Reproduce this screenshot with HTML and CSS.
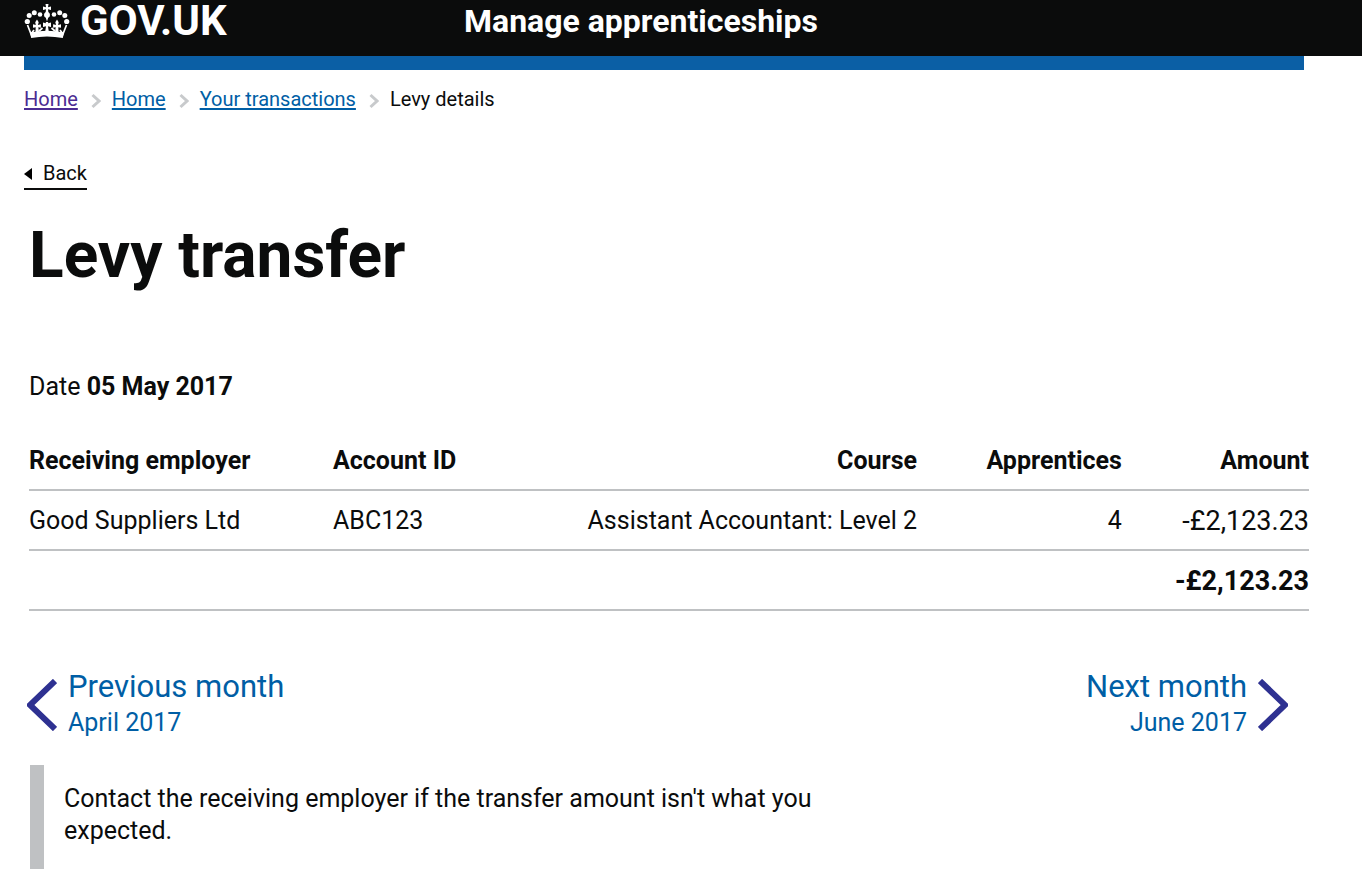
FILE: index.html
```html
<!DOCTYPE html>
<html lang="en">
<head>
<meta charset="utf-8">
<title>Levy transfer - Manage apprenticeships</title>
<meta name="viewport" content="width=device-width, initial-scale=1">
<link rel="stylesheet" href="styles.css">
</head>
<body>
<header class="header">
  <div class="header-inner">
    <a class="logo" href="#">
      <svg class="crown" viewBox="0 0 46 36" aria-hidden="true">
        <g fill="#fff">
          <path d="M21.500 1h3l-.5 3.200 3-.7v3.500l-3-.7.300 2.700q1.700 1 1.700 3 0 2.200-1.800 2.800L23 18.500l-1.200-3.700Q20 14.200 20 12q0-2 1.700-3L22 6.300 19 7V3.500l3 .7z"/>
          <circle cx="3.300" cy="18.500" r="2.600"/><circle cx="5.200" cy="12.500" r="2.500"/><circle cx="10.300" cy="9.700" r="2.500"/><circle cx="16" cy="11.500" r="2.300"/>
          <circle cx="42.700" cy="18.500" r="2.600"/><circle cx="40.800" cy="12.500" r="2.500"/><circle cx="35.700" cy="9.700" r="2.500"/><circle cx="30" cy="11.500" r="2.300"/>
          <path d="M6 29.500q17-3.500 34 0L38.800 35Q23 32 7.200 35z"/>
          <path d="M19 19.500l3 .8-.3-1.300h2.600l-.3 1.300 3-.8v4.500l-3-.8.800 5.500h-3.600l.8-5.500-3 .8z"/>
          <path d="M13 16.500l1.700 2.700-.8 2.800 3-.8v3.500l-2.600-.5L15 29h-3.500l.2-4.800-2.700.5v-3.500l2.800.8-.6-2.800z"/>
          <path d="M33 16.500l1.700 2.700-.6 2.800 2.900-.8v3.500l-2.700-.5.200 4.800H31l.7-4.800-2.600.5v-3.500l3 .8-.8-2.800z"/>
        </g>
        <path d="M3.500 22 7 31l3-4M42.500 22 39 31l-3-4M15 28l3.500-3M31 28l-3.500-3" fill="none" stroke="#fff" stroke-width="1.700"/>
      </svg>
      <span>GOV.UK</span>
    </a>
    <a class="service" href="#">Manage apprenticeships</a>
  </div>
</header>
<div class="page">
  <div class="bar"></div>
  <nav aria-label="Breadcrumb">
    <ol class="breadcrumbs">
      <li><a class="visited" href="#">Home</a></li>
      <li><svg class="sep" viewBox="0 0 10 16" aria-hidden="true"><path d="M1.500 2 8 8l-6.500 6"/></svg><a href="#">Home</a></li>
      <li><svg class="sep" viewBox="0 0 10 16" aria-hidden="true"><path d="M1.500 2 8 8l-6.500 6"/></svg><a href="#">Your transactions</a></li>
      <li><svg class="sep" viewBox="0 0 10 16" aria-hidden="true"><path d="M1.500 2 8 8l-6.500 6"/></svg>Levy details</li>
    </ol>
  </nav>
  <a class="back" href="#"><svg viewBox="0 0 8 12" aria-hidden="true"><path d="M8 0v12L0 6z"/></svg>Back</a>
  <main>
    <h1>Levy transfer</h1>
    <p class="date">Date <strong>05 May 2017</strong></p>
    <table>
      <colgroup><col class="c-employer"><col class="c-account"><col class="c-course"><col class="c-count"><col class="c-amount"></colgroup>
      <thead>
        <tr><th scope="col">Receiving employer</th><th scope="col">Account ID</th><th scope="col" class="num">Course</th><th scope="col" class="num">Apprentices</th><th scope="col" class="num">Amount</th></tr>
      </thead>
      <tbody>
        <tr><td>Good Suppliers Ltd</td><td>ABC123</td><td class="num">Assistant Accountant: Level 2</td><td class="num">4</td><td class="num money">-£2,123.23</td></tr>
        <tr><td colspan="4"></td><td class="num money total">-£2,123.23</td></tr>
      </tbody>
    </table>
    <nav class="months" aria-label="Month">
      <a class="month" href="#">
        <svg viewBox="0 0 30 52" aria-hidden="true"><path d="M28 2 3 26l25 24"/></svg>
        <span class="label"><span class="title">Previous month</span><span>April 2017</span></span>
      </a>
      <a class="month next" href="#">
        <span class="label"><span class="title">Next month</span><span>June 2017</span></span>
        <svg viewBox="0 0 30 52" aria-hidden="true"><path d="m2 2 25 24L2 50"/></svg>
      </a>
    </nav>
    <div class="inset"><p>Contact the receiving employer if the transfer amount isn't what you expected.</p></div>
  </main>
</div>
</body>
</html>
```
FILE: styles.css
```css
* { box-sizing: border-box; }
body { margin: 0; background: #fff; color: #0b0c0c; font: 25px/32px Roboto, "Liberation Sans", sans-serif; }
a { color: #005ea5; }
p, h1, ol { margin: 0; padding: 0; }
.header { background: #0b0c0c; }
.header-inner { display: grid; grid-template-columns: 440px 1fr; height: 56px; padding: 0 24px; }
.header a { color: #fff; text-decoration: none; font-weight: 700; }
.logo { display: flex; gap: 10px; font-size: 42px; line-height: 42px; }
.crown { width: 46px; height: 36px; margin-top: 3px; }
.service { font-size: 32px; line-height: 42px; }
.page { padding: 0 58px 0 24px; }
.bar { height: 14px; background: #0b5fa5; }
.breadcrumbs { display: flex; flex-wrap: wrap; list-style: none; padding-top: 14px; font-size: 20px; line-height: 30px; }
.breadcrumbs li { display: flex; align-items: center; }
.breadcrumbs a, .back { text-underline-offset: 2px; text-decoration-thickness: 2px; }
.breadcrumbs .visited { color: #4c2c92; }
.sep { width: 10px; height: 16px; margin: 3px 11px 0 13px; fill: none; stroke: #c8cacc; stroke-width: 3; }
.back { display: inline-flex; align-items: center; gap: 11px; margin-top: 44px; border-bottom: 2px solid #0b0c0c; color: #0b0c0c; font-size: 20px; line-height: 30px; text-decoration: none; }
.back svg { width: 8px; height: 12px; margin-top: 2px; }
main { padding-left: 5px; margin-right: -5px; }
h1 { margin-top: 32px; font-size: 64px; line-height: 68px; }
.date { margin-top: 81px; }
table { width: 100%; margin-top: 27px; border-collapse: collapse; table-layout: fixed; }
.c-employer { width: 23.75%; }
.c-account { width: 17%; }
.c-course { width: 31.6%; }
.c-count { width: 16%; }
th, td { height: 60px; padding: 2px 38px 0 0; border-bottom: 2px solid #bfc1c3; text-align: left; white-space: nowrap; }
th:last-child, td:last-child { padding-right: 0; }
th.num, td.num { text-align: right; }
.money { font-size: 27px; }
.total { font-weight: 700; }
.months { display: flex; justify-content: space-between; margin-left: -2px; padding: 58px 21px 24px 0; }
.month { display: flex; align-items: center; gap: 11px; text-decoration: none; }
.month svg { width: 30px; height: 52px; fill: none; stroke: #2e3191; stroke-width: 6; }
.label { display: flex; flex-direction: column; line-height: 36px; }
.title { font-size: 31px; }
.next { text-align: right; }
.inset { max-width: 840px; margin-left: 1px; padding: 18px 20px 22px; border-left: 14px solid #bfc1c3; }
```
